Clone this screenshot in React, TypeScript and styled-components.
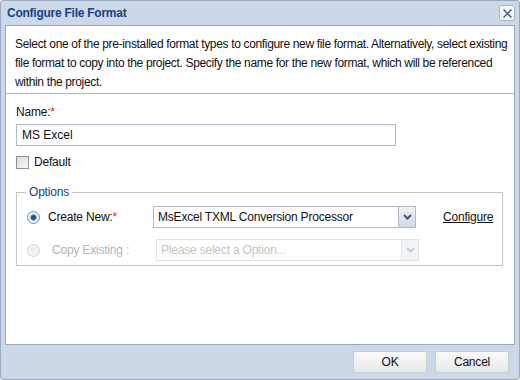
import styled, { createGlobalStyle } from "styled-components";

const GlobalStyle = createGlobalStyle`
  *, *::before, *::after {
    box-sizing: border-box;
  }
  html, body {
    margin: 0;
    padding: 0;
    background: #ffffff;
  }
  body {
    font-family: "Liberation Sans", Arial, sans-serif;
    font-size: 12px;
    letter-spacing: -0.2px;
  }
`;

function App() {
  return (
    <>
      <GlobalStyle />
      <Window>
        <Header>
          <Title>Configure File Format</Title>
          <CloseButton aria-label="close">
            <svg width="11" height="11" viewBox="0 0 11 11">
              <path d="M1.5 1.5 L9.5 9.5 M9.5 1.5 L1.5 9.5" stroke="#3d5a7d" strokeWidth="1.4" fill="none" />
            </svg>
          </CloseButton>
        </Header>
        <Body>
          <Intro>
            Select one of the pre-installed format types to configure new file format. Alternatively, select existing
            <br />
            file format to copy into the project. Specify the name for the new format, which will be referenced
            <br />
            within the project.
          </Intro>
          <Form>
            <Label>
              Name:<Req>*</Req>
            </Label>
            <TextInput defaultValue="MS Excel" />
            <CheckRow>
              <Check />
              <span>Default</span>
            </CheckRow>
            <Fieldset>
              <Legend>Options</Legend>
              <OptionRow>
                <Radio $checked />
                <OptionLabel>
                  Create New:<Req>*</Req>
                </OptionLabel>
                <Combo>
                  <ComboText>MsExcel TXML Conversion Processor</ComboText>
                  <ComboTrigger>
                    <Chevron />
                  </ComboTrigger>
                </Combo>
                <ConfigureLink>Configure</ConfigureLink>
              </OptionRow>
              <OptionRow>
                <Radio $disabled />
                <OptionLabel $disabled>Copy Existing :</OptionLabel>
                <Combo $disabled>
                  <ComboText $disabled>Please select a Option...</ComboText>
                  <ComboTrigger $disabled>
                    <Chevron disabled />
                  </ComboTrigger>
                </Combo>
              </OptionRow>
            </Fieldset>
          </Form>
        </Body>
        <Footer>
          <Button>OK</Button>
          <Button>Cancel</Button>
        </Footer>
      </Window>
    </>
  );
}

function Chevron({ disabled }: { disabled?: boolean }) {
  return (
    <svg width="9" height="6" viewBox="0 0 9 6">
      <path
        d="M1 1 L4.5 4.5 L8 1"
        stroke={disabled ? "#c3ccd6" : "#3a5476"}
        strokeWidth="2"
        fill="none"
      />
    </svg>
  );
}

export default App;

const Window = styled.div`
  width: 520px;
  height: 380px;
  border: 1px solid #99aac2;
  border-radius: 3px;
  background: #ccd8e7;
  display: flex;
  flex-direction: column;
  padding: 0 4px;
`;

const Header = styled.div`
  height: 24px;
  display: flex;
  align-items: center;
  justify-content: space-between;
  padding: 0 0 0 2px;
`;

const Title = styled.div`
  color: #15428b;
  font-weight: bold;
  font-size: 12px;
  letter-spacing: -0.25px;
`;

const CloseButton = styled.div`
  width: 16px;
  height: 16px;
  border: 1px solid #a8b8cc;
  border-radius: 2px;
  background: #f4f7fb;
  display: flex;
  align-items: center;
  justify-content: center;
`;

const Body = styled.div`
  flex: 1;
  background: #ffffff;
  border: 1px solid #99aac2;
  display: flex;
  flex-direction: column;
`;

const Intro = styled.div`
  padding: 9px 9px 1px 9px;
  line-height: 19px;
  color: #111;
  letter-spacing: -0.34px;
  white-space: nowrap;
  border-bottom: 1px solid #a9b9cd;
`;

const Form = styled.div`
  padding: 9px 10px 0 10px;
  display: flex;
  flex-direction: column;
`;

const Label = styled.div`
  height: 21px;
  line-height: 18px;
  color: #111;
`;

const Req = styled.span`
  color: #e02020;
`;

const TextInput = styled.input`
  width: 380px;
  height: 22px;
  border: 1px solid #b5b8c8;
  padding: 0 5px;
  font: inherit;
  color: #111;
  background: linear-gradient(#f2f2f2 0, #ffffff 3px);
  outline: none;
`;

const CheckRow = styled.div`
  display: flex;
  align-items: center;
  gap: 5px;
  margin-top: 9px;
  color: #111;
`;

const Check = styled.span`
  width: 13px;
  height: 13px;
  border: 1px solid #8e8f8f;
  background: linear-gradient(135deg, #dcdcdc, #f8f8f8);
`;

const Fieldset = styled.div`
  position: relative;
  margin-top: 23px;
  width: 487px;
  border: 1px solid #c6c6c6;
  padding: 13px 0 4px 10px;
  display: flex;
  flex-direction: column;
  gap: 11px;
`;

const Legend = styled.span`
  position: absolute;
  top: -8px;
  left: 9px;
  padding: 0 3px;
  background: #ffffff;
  color: #15428b;
`;

const OptionRow = styled.div`
  display: flex;
  align-items: center;
  height: 22px;
`;

const Radio = styled.span<{ $checked?: boolean; $disabled?: boolean }>`
  width: 13px;
  height: 13px;
  border-radius: 50%;
  border: 1px solid ${(p) => (p.$disabled ? "#c0c0c0" : "#7a8a99")};
  background: ${(p) =>
    p.$checked
      ? "radial-gradient(circle, #1d3f66 0, #2f6ea8 2.5px, #e8eef4 3.5px, #f4f4f4 100%)"
      : "radial-gradient(circle, #e4e4e4 0, #f6f6f6 100%)"};
  margin: 0 8px 0 0;
  opacity: ${(p) => (p.$disabled ? 0.7 : 1)};
`;

const OptionLabel = styled.span<{ $disabled?: boolean }>`
  width: 105px;
  color: ${(p) => (p.$disabled ? "#b4b4b4" : "#111")};
  padding-left: ${(p) => (p.$disabled ? "4px" : "0")};
`;

const Combo = styled.div<{ $disabled?: boolean }>`
  width: 263px;
  height: 22px;
  display: flex;
  border: 1px solid ${(p) => (p.$disabled ? "#dfe2e6" : "#b5b8c8")};
  margin-left: ${(p) => (p.$disabled ? "3px" : "0")};
  background: #ffffff;
`;

const ComboText = styled.div<{ $disabled?: boolean }>`
  flex: 1;
  padding-left: 4px;
  line-height: 20px;
  color: ${(p) => (p.$disabled ? "#c4c4c4" : "#111")};
  white-space: nowrap;
  overflow: hidden;
`;

const ComboTrigger = styled.div<{ $disabled?: boolean }>`
  width: 17px;
  display: flex;
  align-items: center;
  justify-content: center;
  background: ${(p) =>
    p.$disabled ? "#f3f4f6" : "linear-gradient(#f0f3f7, #cfd8e3)"};
  border-left: 1px solid ${(p) => (p.$disabled ? "#e6e8eb" : "#b5b8c8")};
`;

const ConfigureLink = styled.span`
  margin-left: 27px;
  color: #111;
  text-decoration: underline;
`;

const Footer = styled.div`
  height: 34px;
  display: flex;
  justify-content: flex-end;
  align-items: center;
  gap: 8px;
  padding-right: 6px;
`;

const Button = styled.div`
  width: 74px;
  height: 22px;
  border: 1px solid #c8ced6;
  border-radius: 2px;
  background: linear-gradient(#fafafa, #e8e8e8);
  display: flex;
  align-items: center;
  justify-content: center;
  color: #111;
`;
